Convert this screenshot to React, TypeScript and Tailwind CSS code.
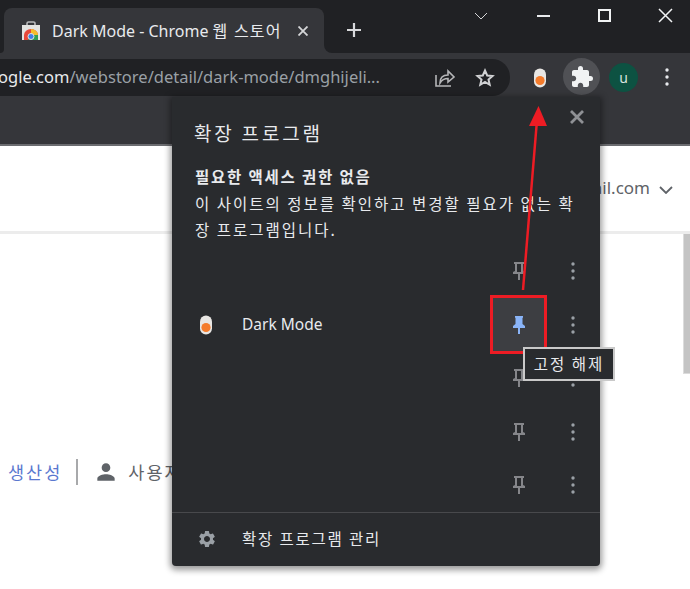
import { MdExtension, MdPerson, MdSettings } from "react-icons/md";

const KR = "font-['Noto_Sans_CJK_KR','Noto_Sans',sans-serif]";

function PinIcon({ filled }: { filled?: boolean }) {
    if (filled) {
        return (
            <svg width="12" height="18" viewBox="0 0 12 18" fill="#8ab4f8">
                <path d="M2 0h8v1.500L9.500 2v6l2.500 2v2H7v6H5v-6H0v-2l2.500-2V2L2 1.500z" />
            </svg>
        );
    }
    return (
        <svg width="12" height="18" viewBox="0 0 12 18" fill="#85868a">
            <path d="M1 0h10v2h-1v7l2 1v2H7v6H5v-6H0v-2l2-1V2H1zm3 2v8h4V2z" fillRule="evenodd" />
        </svg>
    );
}

function Dots({ color = "#9aa0a6" }: { color?: string }) {
    return (
        <svg width="4" height="18" viewBox="0 0 4 18" fill={color}>
            <circle cx="2" cy="2" r="1.700" />
            <circle cx="2" cy="9" r="1.700" />
            <circle cx="2" cy="16" r="1.700" />
        </svg>
    );
}

function ExtIcon() {
    return (
        <svg width="14" height="20" viewBox="0 0 14 20">
            <rect x="1" y="0.500" width="12" height="19" rx="6" fill="#e8e6e3" />
            <circle cx="7" cy="12.500" r="4.600" fill="#f47b2b" />
        </svg>
    );
}

function StoreIcon() {
    return (
        <svg width="20" height="19" viewBox="0 0 20 19">
            <path d="M6 4V2.500A1.500 1.500 0 0 1 7.500 1h5A1.500 1.500 0 0 1 14 2.500V4" fill="none" stroke="#b8b9bb" strokeWidth="1.600" />
            <rect x="1" y="4" width="18" height="15" fill="#e3e3e1" />
            <path d="M3 19v-5a7 6 0 0 1 14 0v5z" fill="#e8483a" />
            <path d="M10 8a7 6 0 0 1 7 6v1l-7-2z" fill="#f6bd2a" />
            <path d="M7 19l3-5 7 0v5z" fill="#2f9e55" />
            <circle cx="10" cy="15.500" r="3" fill="#3f7fe8" stroke="#e3e3e1" strokeWidth="1" />
        </svg>
    );
}

export default function App() {
    return (
        <div className={`relative w-[690px] h-[589px] overflow-hidden bg-white ${KR}`}>
            {/* title bar */}
            <div className="h-[53px] bg-[#202124] flex items-end">
                <div className="relative ml-[4px] w-[320px] h-[45px] bg-[#35363a] rounded-t-lg flex items-center pl-[17px] pr-[15px]">
                    <span className="absolute -left-[4px] bottom-0 w-[4px] h-[8px] bg-[#35363a]">
                        <span className="block w-full h-full bg-[#202124] rounded-br-lg" />
                    </span>
                    <span className="absolute -right-[8px] bottom-0 w-[8px] h-[8px] bg-[#35363a]">
                        <span className="block w-full h-full bg-[#202124] rounded-bl-lg" />
                    </span>
                    <StoreIcon />
                    <span className="ml-[11px] flex-1 text-[16px] text-[#e8eaed] whitespace-nowrap leading-none font-['Noto_Sans','Noto_Sans_CJK_KR',sans-serif]">
                        Dark Mode - Chrome <span className="tracking-[1.200px]">웹 스토어</span>
                    </span>
                    <svg width="10" height="10" viewBox="0 0 10 10" stroke="#d5d6d8" strokeWidth="1.800" className="mr-[1px]">
                        <path d="M0.500 0.500l9 9M9.500 0.500l-9 9" />
                    </svg>
                </div>
                <svg width="14" height="14" viewBox="0 0 14 14" stroke="#d8d9db" strokeWidth="2.200" className="ml-[23px] mb-[16px]">
                    <path d="M7 0v14M0 7h14" />
                </svg>
                {/* window buttons */}
                <div className="ml-auto self-start flex items-center h-[31px] w-[232px]">
                    <svg width="14" height="8" viewBox="0 0 14 8" fill="none" stroke="#d5d6d8" strokeWidth="1" className="ml-[16px]">
                        <path d="M1 1l6 6 6-6" />
                    </svg>
                    <div className="ml-[49px] mt-[1px] w-[13px] h-[1.500px] bg-[#e8eaed]" />
                    <div className="ml-[48px] w-[13px] h-[13px] border-2 border-[#f1f3f4]" />
                    <svg width="15" height="15" viewBox="0 0 15 15" stroke="#f1f3f4" strokeWidth="1.500" className="ml-[47px]">
                        <path d="M1 1l13 13M14 1L1 14" />
                    </svg>
                </div>
            </div>

            {/* toolbar */}
            <div className="h-[43px] bg-[#35363a] flex items-start">
                <div className="mt-[6px] w-[510px] h-[37px] bg-[#202124] rounded-r-[18px] flex items-center overflow-hidden font-['Noto_Sans',sans-serif] text-[16.500px] whitespace-nowrap">
                    <span className="-ml-[2px] text-[#e8eaed]">ogle.com</span>
                    <span className="text-[#9aa0a6] w-[340px] overflow-hidden">/webstore/detail/dark-mode/dmghijeli...</span>
                    <svg width="22" height="20" viewBox="0 0 22 20" fill="none" stroke="#b5b6b8" strokeWidth="1.600" className="ml-[25px]">
                        <path d="M2 7v11h15" />
                        <path d="M6 15c0-5 3-8 8-8V3l6 6-6 5v-3.500c-3 0-6 1-8 4.500z" />
                    </svg>
                    <svg width="20" height="19" viewBox="0 0 20 19" fill="none" stroke="#d0d1d3" strokeWidth="2" className="ml-[19px]">
                        <path d="M10 2.500l2.200 5 5.300.5-4 3.500 1.200 5.300L10 14l-4.700 2.800 1.200-5.300-4-3.500 5.300-.5z" />
                    </svg>
                </div>
                <div className="ml-[23px] mt-[15px]">
                    <ExtIcon />
                </div>
                <div className="ml-[16px] mt-[5px] w-[37px] h-[37px] rounded-full bg-[#505155] flex items-center justify-center">
                    <MdExtension className="text-[#f1f3f4] w-[24px] h-[24px]" />
                </div>
                <div className="ml-[9px] mt-[10px] w-[29px] h-[29px] rounded-full bg-[#0d5242] flex items-center justify-center text-[#d7e3df] text-[14px] leading-none font-['Noto_Sans',sans-serif]">
                    u
                </div>
                <div className="ml-[27px] mt-[15px]">
                    <Dots color="#e8eaed" />
                </div>
            </div>

            {/* bookmarks strip */}
            <div className="h-[48px] bg-[#35363a]" />
            <div className="h-[2px] bg-[#6b6c70]" />

            {/* page */}
            <div className="h-[85px] flex items-center justify-end pb-[1px] pr-[17px] text-[#5f6368]">
                <span className="text-[17px] font-['Noto_Sans',sans-serif]">gmail.com</span>
                <svg width="14" height="8" viewBox="0 0 14 8" fill="none" stroke="#5f6368" strokeWidth="1.800" className="ml-[9px] mt-[3px]">
                    <path d="M1 1l6 6 6-6" />
                </svg>
            </div>
            <div className="h-[3px] bg-[#ececec]" />
            <div className="flex">
                <div className="flex-1 pt-[225px] pl-[8px]">
                    <div className="flex items-center h-[26px] text-[17.500px] tracking-[2px] whitespace-nowrap">
                        <span className="text-[#5a78cf]">생산성</span>
                        <span className="ml-[14px] w-[2px] h-[26px] bg-[#a8a9ab]" />
                        <MdPerson className="ml-[15px] w-[26px] h-[26px] text-[#5f6368]" />
                        <span className="ml-[9px] text-[#5f6368]">사용자</span>
                    </div>
                </div>
                <div className="w-[7px] h-[140px] bg-[#c4c4c4] border-l border-b border-[#dcdcdc]" />
            </div>

            {/* extensions popup */}
            <div className="absolute left-[172px] top-[97px] w-[428px] h-[469px] bg-[#292b2e] rounded-b-[4px] shadow-[0_2px_6px_2px_rgba(0,0,0,0.4)] flex flex-col text-[#e8eaed]">
                <div className="h-[37px] mt-[20px] pl-[22px] flex items-center text-[19px] tracking-[2.800px] leading-none">
                    확장 프로그램
                </div>
                <div className="mt-[15px] pl-[23px] pr-[22px] text-[15.500px] tracking-[2px] leading-[26.500px] break-all">
                    <p className="font-semibold tracking-[1.800px]">필요한 액세스 권한 없음</p>
                    <p>이 사이트의 정보를 확인하고 변경할 필요가 없는 확장 프로그램입니다.</p>
                </div>
                <div className="mt-[2px] flex flex-col">
                    {[false, true, false, false, false].map((active, i) => (
                        <div key={i} className="h-[53.500px] flex items-center">
                            {active && (
                                <>
                                    <div className="ml-[27px]">
                                        <ExtIcon />
                                    </div>
                                    <span className="ml-[29px] text-[15.500px] font-['Noto_Sans',sans-serif]">Dark Mode</span>
                                </>
                            )}
                            <div className="ml-auto mr-[25px] flex items-center">
                                <div className={active ? "w-[57px] h-[59px] border-[3px] border-[#ed1c24] bg-[#3d3e42] flex items-center justify-center" : "w-[57px] h-[53px] flex items-center justify-center"}>
                                    <PinIcon filled={active} />
                                </div>
                                <div className="ml-[24px] w-[4px] flex">
                                    <Dots />
                                </div>
                            </div>
                        </div>
                    ))}
                </div>
                <div className="mt-auto h-[54px] shrink-0 border-t border-[#48494c] flex items-center pl-[25px] pb-[2px]">
                    <MdSettings className="w-[20px] h-[20px] text-[#9aa0a6]" />
                    <span className="ml-[25px] text-[15.500px] tracking-[1.800px]">확장 프로그램 관리</span>
                </div>
                <svg width="14" height="14" viewBox="0 0 14 14" stroke="#8f9195" strokeWidth="2.800" className="absolute right-[16px] top-[13px]">
                    <path d="M1 1l12 12M13 1L1 13" />
                </svg>
            </div>

            {/* tooltip */}
            <div className="absolute left-[523px] top-[347px] w-[92px] h-[34px] bg-[#292b2e] border-2 border-[#c9c9c9] flex items-center justify-center text-[15.500px] tracking-[2px] text-[#e8eaed]">
                고정 해제
            </div>

            {/* red arrow */}
            <svg width="690" height="589" className="absolute left-0 top-0 pointer-events-none">
                <line x1="523" y1="290" x2="537" y2="120" stroke="#ed1c24" strokeWidth="2.500" />
                <polygon points="538.500,106 529,126 547,126" fill="#ed1c24" />
            </svg>
        </div>
    );
}
